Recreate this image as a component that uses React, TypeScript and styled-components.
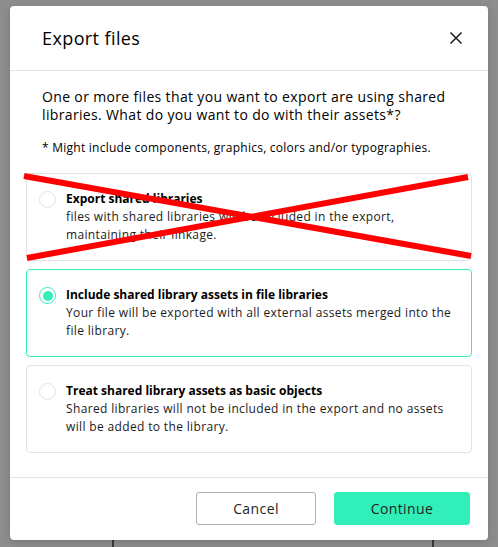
import React, { useState } from 'react'
import styled, { createGlobalStyle } from 'styled-components'

const GlobalStyle = createGlobalStyle`
  html, body {
    margin: 0;
    padding: 0;
    height: 100%;
  }
  body {
    background-color: #8d8d8d;
    background-image:
      linear-gradient(#3a3a3a, #3a3a3a),
      linear-gradient(#3a3a3a, #3a3a3a);
    background-size: 2px 10px, 2px 10px;
    background-position: 112px 540px, 432px 540px;
    background-repeat: no-repeat;
    font-family: 'Open Sans', 'Noto Sans', sans-serif;
    color: #000;
  }
`

const Overlay = styled.div`
  padding: 6px 10px 0 10px;
`

const Modal = styled.div`
  width: 478px;
  background: #fff;
  border-radius: 4px;
  box-shadow: 0 2px 8px rgba(0, 0, 0, 0.15);
`

const Header = styled.div`
  height: 64px;
  display: flex;
  align-items: center;
  justify-content: space-between;
  padding: 0 22px 0 32px;
  border-bottom: 1px solid #e3e3e3;
`

const Title = styled.h2`
  margin: 0;
  font-size: 18px;
  font-weight: 400;
  letter-spacing: 0.4px;
`

const CloseButton = styled.button`
  width: 20px;
  height: 20px;
  padding: 0;
  border: none;
  background: none;
  display: flex;
  align-items: center;
  justify-content: center;
  cursor: pointer;
`

const Body = styled.div`
  padding: 17px 16px 24px 16px;
`

const Intro = styled.p`
  margin: 0 16px;
  font-size: 14px;
  line-height: 18px;
  letter-spacing: 0.35px;
`

const Footnote = styled.p`
  margin: 15px 16px 16px 16px;
  font-size: 12px;
  line-height: 18px;
  letter-spacing: 0.25px;
`

const Options = styled.div`
  display: flex;
  flex-direction: column;
  gap: 8px;
`

const OptionCard = styled.label<{ $selected: boolean }>`
  position: relative;
  display: flex;
  gap: 10px;
  padding: 16px 16px 16px 12px;
  border: 1px solid ${({ $selected }) => ($selected ? '#31efb8' : '#e3e3e3')};
  border-radius: 4px;
  cursor: pointer;
`

const Radio = styled.span<{ $checked: boolean }>`
  flex: none;
  width: 17px;
  height: 17px;
  box-sizing: border-box;
  margin-top: 1px;
  border-radius: 50%;
  border: 1.5px solid ${({ $checked }) => ($checked ? '#31efb8' : '#e3e3e3')};
  display: flex;
  align-items: center;
  justify-content: center;
  &::after {
    content: '';
    width: 10px;
    height: 10px;
    border-radius: 50%;
    background: ${({ $checked }) => ($checked ? '#31efb8' : 'transparent')};
  }
`

const OptionText = styled.div`
  display: flex;
  flex-direction: column;
  font-size: 12px;
  line-height: 18px;
  letter-spacing: 0.35px;
  color: #1b1b1b;
`

const OptionTitle = styled.span`
  font-weight: 700;
  letter-spacing: 0;
  color: #000;
`

const Cross = styled.svg`
  position: absolute;
  left: -4px;
  top: -1px;
  width: 452px;
  height: 90px;
  overflow: visible;
  pointer-events: none;
`

const Footer = styled.div`
  display: flex;
  justify-content: flex-end;
  gap: 18px;
  padding: 14px 18px 15px 18px;
  border-top: 1px solid #e3e3e3;
`

const Button = styled.button<{ $primary?: boolean; $width: number }>`
  width: ${({ $width }) => $width}px;
  height: 33px;
  border-radius: 3px;
  font-family: inherit;
  font-size: 14px;
  letter-spacing: 0.4px;
  color: #1f1f1f;
  cursor: pointer;
  border: 1px solid ${({ $primary }) => ($primary ? '#31efb8' : '#b1b2b5')};
  background: ${({ $primary }) => ($primary ? '#31efb8' : '#fff')};
`

const options = [
  {
    id: 'all',
    title: 'Export shared libraries',
    text: 'files with shared libraries will be included in the export, maintaining their linkage.',
    crossed: true,
  },
  {
    id: 'merge',
    title: 'Include shared library assets in file libraries',
    text: 'Your file will be exported with all external assets merged into the file library.',
    crossed: false,
  },
  {
    id: 'detach',
    title: 'Treat shared library assets as basic objects',
    text: 'Shared libraries will not be included in the export and no assets will be added to the library.',
    crossed: false,
  },
]

const App: React.FC = () => {
  const [selected, setSelected] = useState('merge')

  return (
    <Overlay>
      <GlobalStyle />
      <Modal>
        <Header>
          <Title>Export files</Title>
          <CloseButton aria-label="Close">
            <svg width="14" height="14" viewBox="0 0 14 14">
              <path d="M1.5 1.5 L12.5 12.5 M12.5 1.5 L1.5 12.5" stroke="#222" strokeWidth="1.6" />
            </svg>
          </CloseButton>
        </Header>
        <Body>
          <Intro>
            One or more files that you want to export are using shared libraries. What do you want to do with
            their assets*?
          </Intro>
          <Footnote>* Might include components, graphics, colors and/or typographies.</Footnote>
          <Options>
            {options.map((o) => (
              <OptionCard key={o.id} $selected={selected === o.id} onClick={() => setSelected(o.id)}>
                <Radio $checked={selected === o.id} />
                <OptionText>
                  <OptionTitle>{o.title}</OptionTitle>
                  <span>{o.text}</span>
                </OptionText>
                {o.crossed && (
                  <Cross viewBox="0 0 452 90">
                    <path d="M1 3 L448 83 M4 85 L445 4" stroke="#ff0000" strokeWidth="6" />
                  </Cross>
                )}
              </OptionCard>
            ))}
          </Options>
        </Body>
        <Footer>
          <Button $width={120}>Cancel</Button>
          <Button $primary $width={136}>Continue</Button>
        </Footer>
      </Modal>
    </Overlay>
  )
}

export default App
